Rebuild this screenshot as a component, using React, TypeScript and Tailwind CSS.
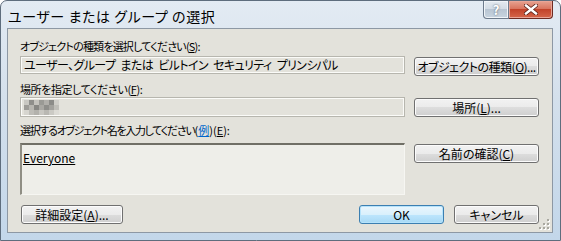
import React from 'react';

const jp = "font-['Noto_Sans_CJK_JP','Noto_Sans',sans-serif] [font-feature-settings:'palt']";

function Key({ k }: { k: string }) {
  return <span className="underline underline-offset-1">{k}</span>;
}

function VistaButton({
  children,
  width,
  primary = false,
}: {
  children: React.ReactNode;
  width: string;
  primary?: boolean;
}) {
  return (
    <button
      type="button"
      className={
        primary
          ? `${width} h-[19px] shrink-0 whitespace-nowrap rounded-[3px] border border-[#3c7fb1] bg-[linear-gradient(to_bottom,#eaf6fd_0%,#d9f0fc_50%,#bee6fd_50%,#a7d9f5_100%)] shadow-[inset_0_0_0_1px_#b6e3fb] text-[12px] leading-[17px] text-black`
          : `${width} h-[19px] shrink-0 whitespace-nowrap rounded-[3px] border border-[#707070] bg-[linear-gradient(to_bottom,#f2f2f2_0%,#ebebeb_50%,#dddddd_50%,#cfcfcf_100%)] shadow-[inset_0_0_0_1px_#fcfcfc] text-[12px] leading-[17px] text-black`
      }
    >
      {children}
    </button>
  );
}

const mosaic = [
  ['#c9c8c2', '#8f8f8b', '#c4c3bd', '#9a9a95', '#b0afaa', '#8c8c88', '#d0cfc9'],
  ['#9d9c97', '#b7b6b0', '#878783', '#a9a8a3', '#8e8e8a', '#a3a29d', '#c0bfb9'],
  ['#d6d5cf', '#bebdb7', '#b3b2ac', '#c8c7c1', '#b9b8b2', '#cbcac4', '#dcdbd5'],
];

export default function App() {
  return (
    <div className={`${jp} w-[561px] h-[241px] flex flex-col rounded-t-[7px] border border-[#5e6d7d] bg-[linear-gradient(to_bottom,#e3ebf3_0%,#d4e0ec_40%,#c3d7ea_100%)] overflow-hidden`}>
      {/* Title bar */}
      <div className="h-[27px] flex items-start shrink-0">
        <div className="pl-[7px] pt-[6px] text-[14px] leading-[18px] tracking-[0.6px] text-black">
          ユーザー または グループ の選択
        </div>
        <div className="ml-auto mr-[7px] flex">
          <div className="w-[26px] h-[18px] rounded-bl-[4px] border border-t-0 border-[#6d7b8c] bg-[linear-gradient(to_bottom,#e4eaf0_0%,#d2dbe4_50%,#b9c6d3_50%,#c8d4e0_100%)] shadow-[inset_0_0_0_1px_#f0f4f8] flex items-center justify-center">
            <span className="text-[13px] leading-none font-bold text-white [text-shadow:0_0_2px_#44505c]">?</span>
          </div>
          <div className="w-[44px] h-[18px] rounded-br-[4px] border border-l-0 border-t-0 border-[#6e2b22] bg-[linear-gradient(to_bottom,#e7a391_0%,#d7705a_50%,#c2432a_50%,#d5664a_100%)] shadow-[inset_0_0_0_1px_#e9a597] flex items-center justify-center">
            <svg width="14" height="11" viewBox="0 0 14 11">
              <path d="M2 1.5 L12 9.5 M12 1.5 L2 9.5" stroke="#5a2018" strokeWidth="4" strokeLinecap="square" />
              <path d="M2 1.5 L12 9.5 M12 1.5 L2 9.5" stroke="#ffffff" strokeWidth="2.4" strokeLinecap="square" />
            </svg>
          </div>
        </div>
      </div>

      {/* Client area */}
      <div className="ml-[6px] w-[546px] h-[205px] shrink-0 border border-[#8d98a4] bg-[#e3e2db] pt-[10px] pl-[12px] pr-[13px] text-[12px] text-black relative">
        <div className="h-[14px] leading-[14px] text-[11px] tracking-[-0.8px] whitespace-nowrap">
          オブジェクトの種類を選択してください(<Key k="S" />):
        </div>
        <div className="mt-[3px] flex items-start">
          <div className="w-[385px] h-[18px] border border-[#b7b6ae] shadow-[inset_0_0_0_1px_#fbfbf8] px-[3px] leading-[16px] tracking-[-0.6px] [word-spacing:3px] whitespace-nowrap overflow-hidden">
            ユーザー、グループ または ビルトイン セキュリティ プリンシパル
          </div>
          <div className="ml-[9px] mt-[1px]">
            <VistaButton width="w-[125px] tracking-[-0.5px]">
              オブジェクトの種類(<Key k="O" />)...
            </VistaButton>
          </div>
        </div>

        <div className="mt-[6px] h-[14px] leading-[14px] text-[11px] tracking-[-0.4px] whitespace-nowrap">
          場所を指定してください(<Key k="F" />):
        </div>
        <div className="mt-[1px] flex items-start">
          <div className="w-[385px] h-[20px] border border-[#b7b6ae] shadow-[inset_0_0_0_1px_#fbfbf8] pl-[3px] pt-[2px]">
            <div className="flex flex-col">
              {mosaic.map((row, i) => (
                <div key={i} className="flex">
                  {row.map((c, j) => (
                    <div key={j} className="w-[5px] h-[5px]" style={{ backgroundColor: c }} />
                  ))}
                </div>
              ))}
            </div>
          </div>
          <div className="ml-[9px] mt-[1px]">
            <VistaButton width="w-[125px]">
              場所(<Key k="L" />)...
            </VistaButton>
          </div>
        </div>

        <div className="mt-[6px] h-[14px] leading-[14px] text-[11px] whitespace-nowrap">
          <span className="tracking-[-1.3px]">選択するオブジェクト名を入力してください</span>
          <span className="tracking-[0px]">
            (<span className="text-[#0066cc] underline underline-offset-1">例</span>)(<Key k="E" />):
          </span>
        </div>
        <div className="mt-[6px] flex items-start">
          <div className="w-[385px] h-[52px] border-t-2 border-l-2 border-r border-b border-t-[#706f66] border-l-[#8f8e84] border-r-[#f6f6f2] border-b-[#f6f6f2] bg-[#eeeee9] pl-[1px] pt-[6px] leading-[14px]">
            <span className="underline underline-offset-1">Everyone</span>
          </div>
          <div className="ml-[9px] mt-[1px]">
            <VistaButton width="w-[125px]">
              名前の確認(<Key k="C" />)
            </VistaButton>
          </div>
        </div>

        <div className="mt-[10px] flex items-start">
          <div className="ml-[1px]">
            <VistaButton width="w-[102px]">
              詳細設定(<Key k="A" />)...
            </VistaButton>
          </div>
          <div className="ml-auto">
            <VistaButton width="w-[85px]" primary>
              OK
            </VistaButton>
          </div>
          <div className="ml-[10px]">
            <VistaButton width="w-[85px]">キャンセル</VistaButton>
          </div>
        </div>

        {/* Size grip */}
        <svg className="absolute right-[2px] bottom-[2px]" width="11" height="11" viewBox="0 0 11 11">
          {[
            [8, 0], [8, 4], [4, 4], [8, 8], [4, 8], [0, 8],
          ].map(([x, y], i) => (
            <g key={i}>
              <rect x={x + 1} y={y + 1} width="2" height="2" fill="#ffffff" />
              <rect x={x} y={y} width="2" height="2" fill="#a9a8a0" />
            </g>
          ))}
        </svg>
      </div>
    </div>
  );
}
